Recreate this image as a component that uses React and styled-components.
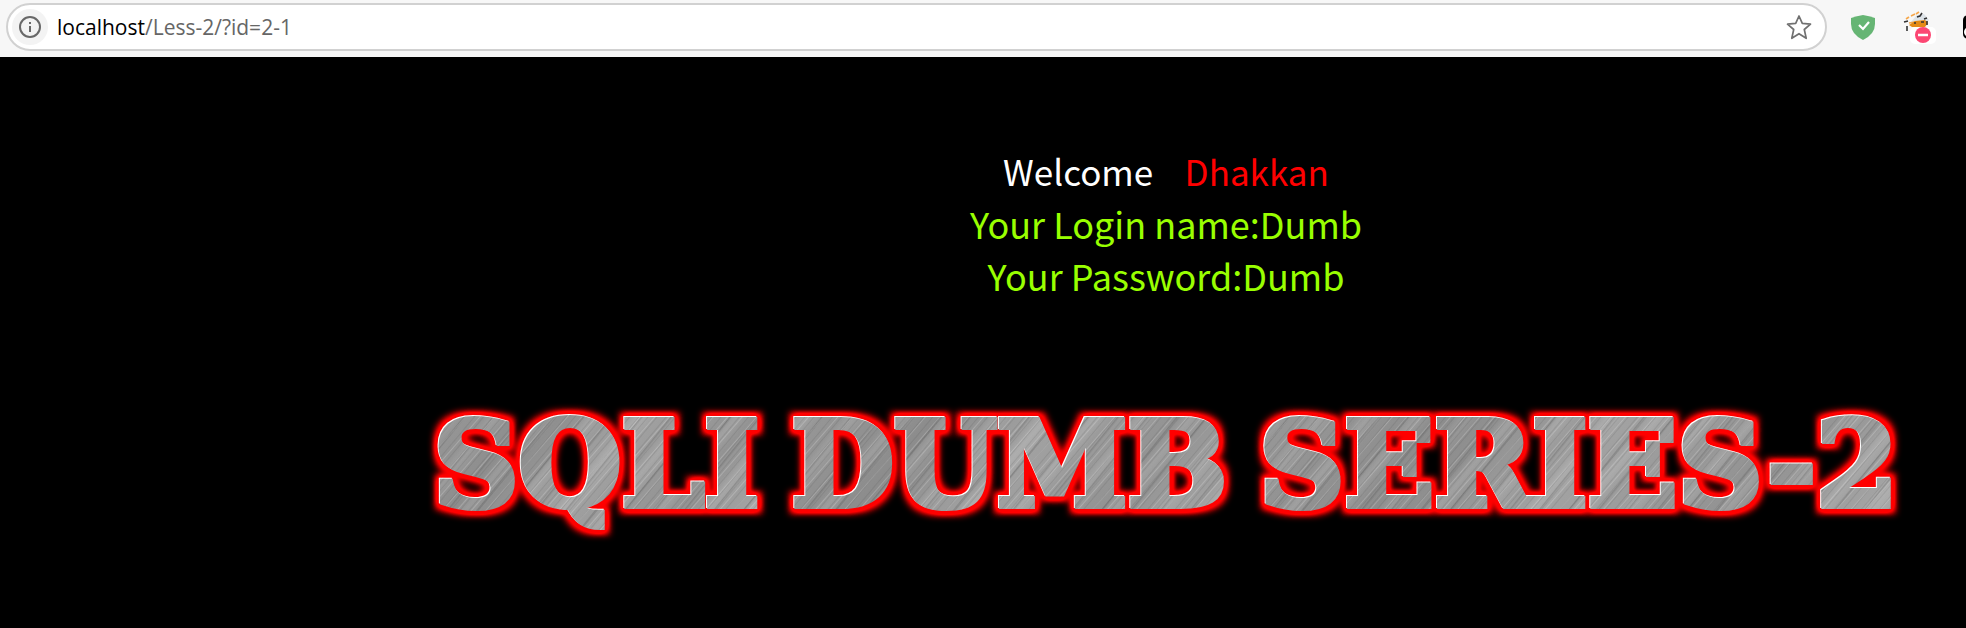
import React from "react";
import styled, { createGlobalStyle } from "styled-components";

const GlobalStyle = createGlobalStyle`
  * {
    box-sizing: border-box;
  }

  body {
    margin: 0;
    background: #000;
    overflow-x: hidden;
  }
`;

const Toolbar = styled.header`
  display: flex;
  align-items: flex-start;
  height: 57px;
  padding: 3px 0 0 6px;
  background: #f7f7f7;
  overflow: hidden;
`;

const AddressBar = styled.form`
  display: flex;
  flex: 1;
  align-items: center;
  height: 48px;
  padding: 0 13px 0 4px;
  background: #fff;
  border: 2px solid #d1d1d1;
  border-radius: 24px;
`;

const IconButton = styled.button`
  display: flex;
  flex: none;
  align-items: center;
  justify-content: center;
  width: ${({ $size }) => $size}px;
  height: ${({ $size }) => $size}px;
  padding: 0;
  border: 0;
  border-radius: 50%;
  background: ${({ $fill }) => $fill || "transparent"};
`;

const UrlField = styled.label`
  display: grid;
  flex: 1;
  align-items: center;
  margin-left: 9px;
  font: 21px/28px "Open Sans", "Noto Sans", sans-serif;
`;

const UrlInput = styled.input`
  grid-area: 1 / 1;
  width: 100%;
  padding: 0;
  border: 0;
  outline: 0;
  background: transparent;
  color: transparent;
  caret-color: #000;
  font: inherit;
`;

const UrlText = styled.span`
  grid-area: 1 / 1;
  color: #666;
  pointer-events: none;

  b {
    color: #000;
    font-weight: 400;
  }
`;

const Extensions = styled.div`
  display: flex;
  flex: none;
  width: 139px;
  height: 48px;
  padding-left: 16px;
  align-items: center;
  gap: 16px;
`;

const Page = styled.main`
  padding: 88px 0 80px 366px;
`;

const Greeting = styled.div`
  color: #fff;
  font-family: "Noto Sans CJK SC", sans-serif;
  line-height: 52px;
  text-align: center;
`;

const Line = styled.p`
  margin: 0;
  color: ${({ $color }) => $color || "#fff"};
  font-size: ${({ $size }) => $size || 36}px;
  white-space: pre;

  span {
    color: #f00;
  }
`;

const Banner = styled.h1`
  display: flex;
  justify-content: center;
  gap: 32px;
  margin: 94px 0 0;
  font: bold 118px/140px "DejaVu Serif", serif;
  white-space: nowrap;
  filter: url(#metal-glow);
`;

const Word = styled.span`
  color: transparent;
  -webkit-text-stroke: 6px transparent;
  background:
    repeating-linear-gradient(130deg, #0000 0 2px, #4442 3px, #0000 4px 7px),
    repeating-linear-gradient(131deg, #fff0 0 4px, #fff3 5px, #fff0 6px 11px),
    repeating-linear-gradient(129deg, #0000 0 13px, #3333 14px, #0000 16px 23px),
    repeating-linear-gradient(130deg, #fff0 0 15px, #fff2 24px, #fff0 37px),
    linear-gradient(130deg, #999, #8c8c8c 30%, #a2a2a2 50%, #929292 75%, #aaa);
  background-clip: text;
`;

const Defs = styled.svg`
  display: block;
  width: 0;
  height: 0;
`;

const InfoIcon = () => (
  <svg width="22" height="22" viewBox="0 0 22 22" fill="none" stroke="#686868" strokeWidth="2">
    <circle cx="11" cy="11" r="10" />
    <path d="M11 10v6M11 6v2" />
  </svg>
);

const StarIcon = () => (
  <svg width="26" height="26" viewBox="0 0 26 26" fill="none" stroke="#707070" strokeWidth="1.7" strokeLinejoin="round">
    <path d="M13 2l3.3 7.4 8.2.8-6.2 5.3 1.9 8.8-7.2-4.6-7.2 4.6 1.9-8.8-6.2-5.3 8.2-.8z" />
  </svg>
);

const ShieldIcon = () => (
  <svg width="24" height="25" viewBox="0 0 24 25">
    <path d="M0 3Q6 1 12 0q6 1 12 3v6q0 10-12 16Q0 19 0 9z" fill="#66b574" />
    <path d="M8 10l4 4 6-7" fill="none" stroke="#fff" strokeWidth="2.2" />
  </svg>
);

const BugIcon = () => (
  <svg width="34" height="34" viewBox="-1 -1 34 34">
    <path d="M8 11l6-7 7-1 5 6-5 6H9z" fill="#dde3e8" />
    <path d="M3 8l3-2M8 5l4-2M13 3l3-2M6 12l6-1" stroke="#f6a74b" strokeWidth="1.6" />
    <path d="M6 14l6-4 10-1 3 3-3 4H9z" fill="#e48a16" />
    <path d="M14 6l3-1 2-3M21 8l3-1M1 11l4-1M4 15v5M24 10v4M11 12h2M18 11h3" stroke="#333" strokeWidth="1.6" fill="none" />
    <rect x="7" y="16" width="26" height="17" rx="5" fill="#fff" />
    <circle cx="20" cy="24" r="8" fill="#fc4773" />
    <path d="M15 24h10" stroke="#fff" strokeWidth="2.5" />
  </svg>
);

const ScriptIcon = () => (
  <svg width="24" height="24" viewBox="0 0 24 24">
    <rect width="24" height="24" rx="5" fill="#000" />
    <circle cx="6" cy="17" r="5" fill="#fff" />
  </svg>
);

const MetalGlow = () => (
  <Defs aria-hidden="true">
    <filter id="metal-glow" x="-5%" y="-20%" width="110%" height="140%" colorInterpolationFilters="sRGB">
      <feMorphology in="SourceAlpha" operator="dilate" radius="5" result="wide" />
      <feGaussianBlur in="wide" stdDeviation="3" result="soft" />
      <feFlood floodColor="#f00" />
      <feComposite in2="soft" operator="in" result="glow" />
      <feGaussianBlur in="SourceAlpha" stdDeviation="3" result="near" />
      <feComponentTransfer in="near" result="core">
        <feFuncA type="linear" slope="8" />
      </feComponentTransfer>
      <feFlood floodColor="#f00" />
      <feComposite in2="core" operator="in" result="outline" />
      <feOffset in="SourceAlpha" dx="-1" dy="-1" result="edge" />
      <feFlood floodColor="#fff" />
      <feComposite in2="edge" operator="in" result="highlight" />
      <feMerge>
        <feMergeNode in="glow" />
        <feMergeNode in="outline" />
        <feMergeNode in="highlight" />
        <feMergeNode in="SourceGraphic" />
      </feMerge>
    </filter>
  </Defs>
);

const App = () => (
  <>
    <GlobalStyle />
    <MetalGlow />
    <Toolbar>
      <AddressBar onSubmit={e => e.preventDefault()}>
        <IconButton type="button" $size={36} $fill="#f3f3f3" aria-label="Site information">
          <InfoIcon />
        </IconButton>
        <UrlField>
          <UrlText aria-hidden="true"><b>localhost</b>/Less-2/?id=2-1</UrlText>
          <UrlInput aria-label="Address" />
        </UrlField>
        <IconButton type="button" $size={26} aria-label="Add to favourites">
          <StarIcon />
        </IconButton>
      </AddressBar>
      <Extensions>
        <IconButton type="button" $size={40} aria-label="Protection">
          <ShieldIcon />
        </IconButton>
        <IconButton type="button" $size={40} aria-label="Debugger">
          <BugIcon />
        </IconButton>
        <IconButton type="button" $size={40} aria-label="Scripts">
          <ScriptIcon />
        </IconButton>
      </Extensions>
    </Toolbar>
    <Page>
      <Greeting>
        <Line $size={35}>Welcome{"\u00a0\u00a0\u00a0"}<span>{" Dhakkan"}</span></Line>
        <Line $color="#99ff00">Your Login name:Dumb</Line>
        <Line $color="#99ff00">Your Password:Dumb</Line>
      </Greeting>
      <Banner>
        <Word>SQLI</Word>
        <Word>DUMB</Word>
        <Word>SERIES-2</Word>
      </Banner>
    </Page>
  </>
);

export default App;
